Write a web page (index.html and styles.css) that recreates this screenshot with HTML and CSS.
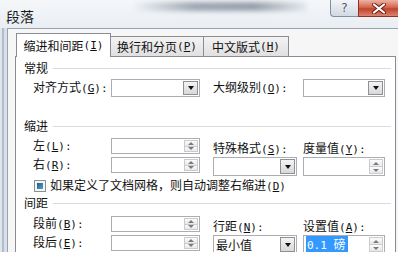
FILE: index.html
```html
<!DOCTYPE html>
<html lang="zh-CN">
<head>
<meta charset="utf-8">
<title>段落</title>
<link rel="stylesheet" href="styles.css">
</head>
<body>
<div class="window">
  <div class="titlebar">
    <span class="title">段落</span>
    <div class="smudge"></div>
    <div class="caption">
      <div class="cbtn help">?</div>
      <div class="cbtn close">
        <svg width="16" height="11" viewBox="0 0 16 11">
          <path d="M3 1.5 L13 9.5 M13 1.5 L3 9.5" stroke="#6b1d12" stroke-width="4" stroke-linecap="round"/>
          <path d="M3 1.5 L13 9.5 M13 1.5 L3 9.5" stroke="#ffffff" stroke-width="2.2" stroke-linecap="round"/>
        </svg>
      </div>
    </div>
  </div>
  <div class="frame">
    <div class="edge"></div>
    <div class="client">
      <div class="tabs">
        <div class="tab active t1">缩进和间距<span class="k">(<u>I</u>)</span></div>
        <div class="tab t2">换行和分页<span class="k">(<u>P</u>)</span></div>
        <div class="tab t3">中文版式<span class="k">(<u>H</u>)</span></div>
      </div>
      <div class="panel">
        <div class="ghead first"><span>常规</span><i class="rule"></i></div>
        <div class="grid g1">
          <span class="lbl c1">对齐方式<span class="k">(<u>G</u>):</span></span>
          <div class="select c2"><span class="val"></span><span class="drop"></span></div>
          <span class="lbl c4">大纲级别<span class="k">(<u>O</u>):</span></span>
          <div class="select c6"><span class="val"></span><span class="drop"></span></div>
        </div>

        <div class="ghead sec2"><span>缩进</span><i class="rule"></i></div>
        <div class="grid g2">
          <span class="lbl c1 r1">左<span class="k">(<u>L</u>):</span></span>
          <div class="spin c2 r1"><span class="val"></span><span class="btns"><span class="sb up"></span><span class="sb dn"></span></span></div>
          <span class="lbl c4 r1 toplbl">特殊格式<span class="k">(<u>S</u>):</span></span>
          <span class="lbl c6 r1 toplbl">度量值<span class="k">(<u>Y</u>):</span></span>
          <span class="lbl c1 r2">右<span class="k">(<u>R</u>):</span></span>
          <div class="spin c2 r2"><span class="val"></span><span class="btns"><span class="sb up"></span><span class="sb dn"></span></span></div>
          <div class="select tall c4 r2"><span class="val"></span><span class="drop"></span></div>
          <div class="spin tall c6 r2"><span class="val"></span><span class="btns"><span class="sb up"></span><span class="sb dn"></span></span></div>
        </div>
        <div class="check"><span class="cb"></span><span>如果定义了文档网格，则自动调整右缩进<span class="k">(<u>D</u>)</span></span></div>

        <div class="ghead sec3"><span>间距</span><i class="rule"></i></div>
        <div class="grid g3">
          <span class="lbl c1 r1">段前<span class="k">(<u>B</u>):</span></span>
          <div class="spin c2 r1"><span class="val"></span><span class="btns"><span class="sb up"></span><span class="sb dn"></span></span></div>
          <span class="lbl c4 r1 toplbl">行距<span class="k">(<u>N</u>):</span></span>
          <span class="lbl c6 r1 toplbl">设置值<span class="k">(<u>A</u>):</span></span>
          <span class="lbl c1 r2">段后<span class="k">(<u>E</u>):</span></span>
          <div class="spin c2 r2"><span class="val"></span><span class="btns"><span class="sb up"></span><span class="sb dn"></span></span></div>
          <div class="select tall c4 r2"><span class="val">最小值</span><span class="drop"></span></div>
          <div class="spin tall c6 r2"><span class="val"><span class="sel"><span class="num">0.1&nbsp;</span>磅</span></span><span class="btns"><span class="sb up"></span><span class="sb dn"></span></span></div>
        </div>
      </div>
    </div>
  </div>
</div>
</body>
</html>
```

FILE: styles.css
```css
* { box-sizing: border-box; }

body {
  margin: 0;
  width: 398px;
  height: 260px;
  overflow: hidden;
  background: #ffffff;
  font-family: "Noto Sans CJK SC", "Noto Sans", sans-serif;
  font-size: 12px;
  color: #111111;
}

u { text-decoration: underline; text-underline-offset: 1px; }

.k, .num {
  font-family: "DejaVu Sans Mono", "Liberation Mono", monospace;
  font-size: 11px;
}

.window {
  height: 252px;
  overflow: hidden;
  display: flex;
  flex-direction: column;
  background: #e3e9f0;
}

/* title bar */
.titlebar {
  height: 28px;
  flex: none;
  display: flex;
  align-items: flex-start;
  background: linear-gradient(#f5f7fa, #e9eef3);
}
.title {
  font-size: 14px;
  line-height: 16px;
  margin: 8px 0 0 6px;
  color: #1b1b1b;
}
.smudge {
  width: 175px;
  height: 9px;
  margin: 2px 0 0 98px;
  background: linear-gradient(to right, rgba(120,132,146,0), #7b8694 35%, #6f7a88 70%, rgba(120,132,146,0.15));
  filter: blur(2.5px);
  opacity: 0.7;
}
.caption {
  margin-left: auto;
  display: flex;
}
.cbtn {
  height: 17px;
  display: flex;
  align-items: center;
  justify-content: center;
}
.help {
  width: 28px;
  border: 1px solid #838fa0;
  border-top: none;
  border-right: none;
  border-bottom-left-radius: 4px;
  background: linear-gradient(#f2f4f7, #d2d9e2);
  font: 12px/1 "DejaVu Sans", sans-serif;
  color: #4f5967;
  text-shadow: 0 0 2px #ffffff;
}
.close {
  width: 40px;
  border: 1px solid #8d3225;
  border-top: none;
  border-right: none;
  background: linear-gradient(#ecb3a6, #d7674f 45%, #c3422c 55%, #da8572);
}

/* frame & client */
.frame {
  flex: 1;
  display: flex;
  min-height: 0;
}
.edge {
  width: 7px;
  flex: none;
  background: linear-gradient(to right, #dfe6ee 0 2px, #b1bdca 2px 4px, #d8e0e9 4px 7px);
}
.client {
  flex: 1;
  min-width: 0;
  border-left: 1px solid #9aa4af;
  border-top: 1px solid #9aa4af;
  background: #f6f6f6;
  padding: 4px 2px 0 7px;
  display: flex;
  flex-direction: column;
}

/* tabs */
.tabs {
  height: 23px;
  flex: none;
  display: flex;
  align-items: flex-end;
  padding-left: 1px;
}
.tab {
  height: 20px;
  margin-left: -1px;
  border: 1px solid #898c95;
  border-bottom: none;
  background: linear-gradient(#f3f3f3, #e0e0e0);
  display: flex;
  align-items: center;
  justify-content: center;
  line-height: 14px;
  white-space: nowrap;
}
.tab.active {
  height: 24px;
  margin-left: 0;
  margin-bottom: -1px;
  background: #ffffff;
  position: relative;
  z-index: 1;
}
.t1 { width: 95px; }
.t2 { width: 94px; }
.t3 { width: 86px; }

/* panel */
.panel {
  flex: 1;
  background: #ffffff;
  border: 1px solid #898c95;
  border-bottom: none;
  padding: 4px 4px 0 8px;
}
.ghead {
  display: flex;
  align-items: center;
  gap: 5px;
  height: 14px;
  line-height: 14px;
}
.rule {
  flex: 1;
  border-top: 1px solid #d6dce2;
}
.sec2 { margin-top: 22px; }
.sec3 { margin-top: 3px; }

.grid {
  display: grid;
  grid-template-columns: 78px 89px 13px 84px 6px 82px;
  padding-left: 9px;
}
.g1 { margin-top: 4px; grid-template-rows: 18px; }
.g2, .g3 { margin-top: 5px; grid-template-rows: 16px 16px; row-gap: 3px; }
.g3 { margin-top: 6px; }

.c1 { grid-column: 1; }
.c2 { grid-column: 2; }
.c4 { grid-column: 4 / span 2; }
.c6 { grid-column: 6; }
.r1 { grid-row: 1; }
.r2 { grid-row: 2; }

.lbl {
  line-height: 14px;
  align-self: center;
  white-space: nowrap;
}
.toplbl {
  align-self: end;
  margin-bottom: -3px;
}
.c4.select { grid-column: 4; }

/* controls */
.select, .spin {
  border: 1px solid #abadb3;
  background: #ffffff;
  display: flex;
  align-items: stretch;
  padding: 1px;
}
.tall { height: 19px; align-self: start; }
.val {
  flex: 1;
  padding-left: 1px;
  line-height: 14px;
  display: flex;
  align-items: center;
  white-space: nowrap;
}
.drop {
  width: 15px;
  flex: none;
  border: 1px solid #8f9094;
  background: linear-gradient(#f4f4f4, #d8d8d8);
  display: flex;
  align-items: center;
  justify-content: center;
}
.drop::before {
  content: "";
  border-left: 3.5px solid transparent;
  border-right: 3.5px solid transparent;
  border-top: 4px solid #111111;
}
.btns {
  width: 14px;
  flex: none;
  display: flex;
  flex-direction: column;
}
.sb {
  flex: 1;
  border: 1px solid #c9cbcf;
  background: linear-gradient(#fbfbfb, #e8e8e8);
  display: flex;
  align-items: center;
  justify-content: center;
}
.sb.dn { margin-top: -1px; }
.sb.up::before {
  content: "";
  border-left: 3px solid transparent;
  border-right: 3px solid transparent;
  border-bottom: 3px solid #7b7b7b;
}
.sb.dn::before {
  content: "";
  border-left: 3px solid transparent;
  border-right: 3px solid transparent;
  border-top: 3px solid #7b7b7b;
}
.sel {
  background: #3399ff;
  color: #ffffff;
  padding: 0 2px 0 1px;
  line-height: 15px;
}

/* checkbox */
.check {
  margin-top: 6px;
  padding-left: 10px;
  display: flex;
  align-items: center;
  gap: 4px;
  height: 14px;
  line-height: 14px;
  white-space: nowrap;
}
.cb {
  width: 12px;
  height: 12px;
  flex: none;
  border: 1px solid #8e8f8f;
  background: #f4f4f4;
  padding: 2px;
  display: flex;
}
.cb::before {
  content: "";
  flex: 1;
  background: linear-gradient(135deg, #1b5f8c, #4ea2c9);
}
```
